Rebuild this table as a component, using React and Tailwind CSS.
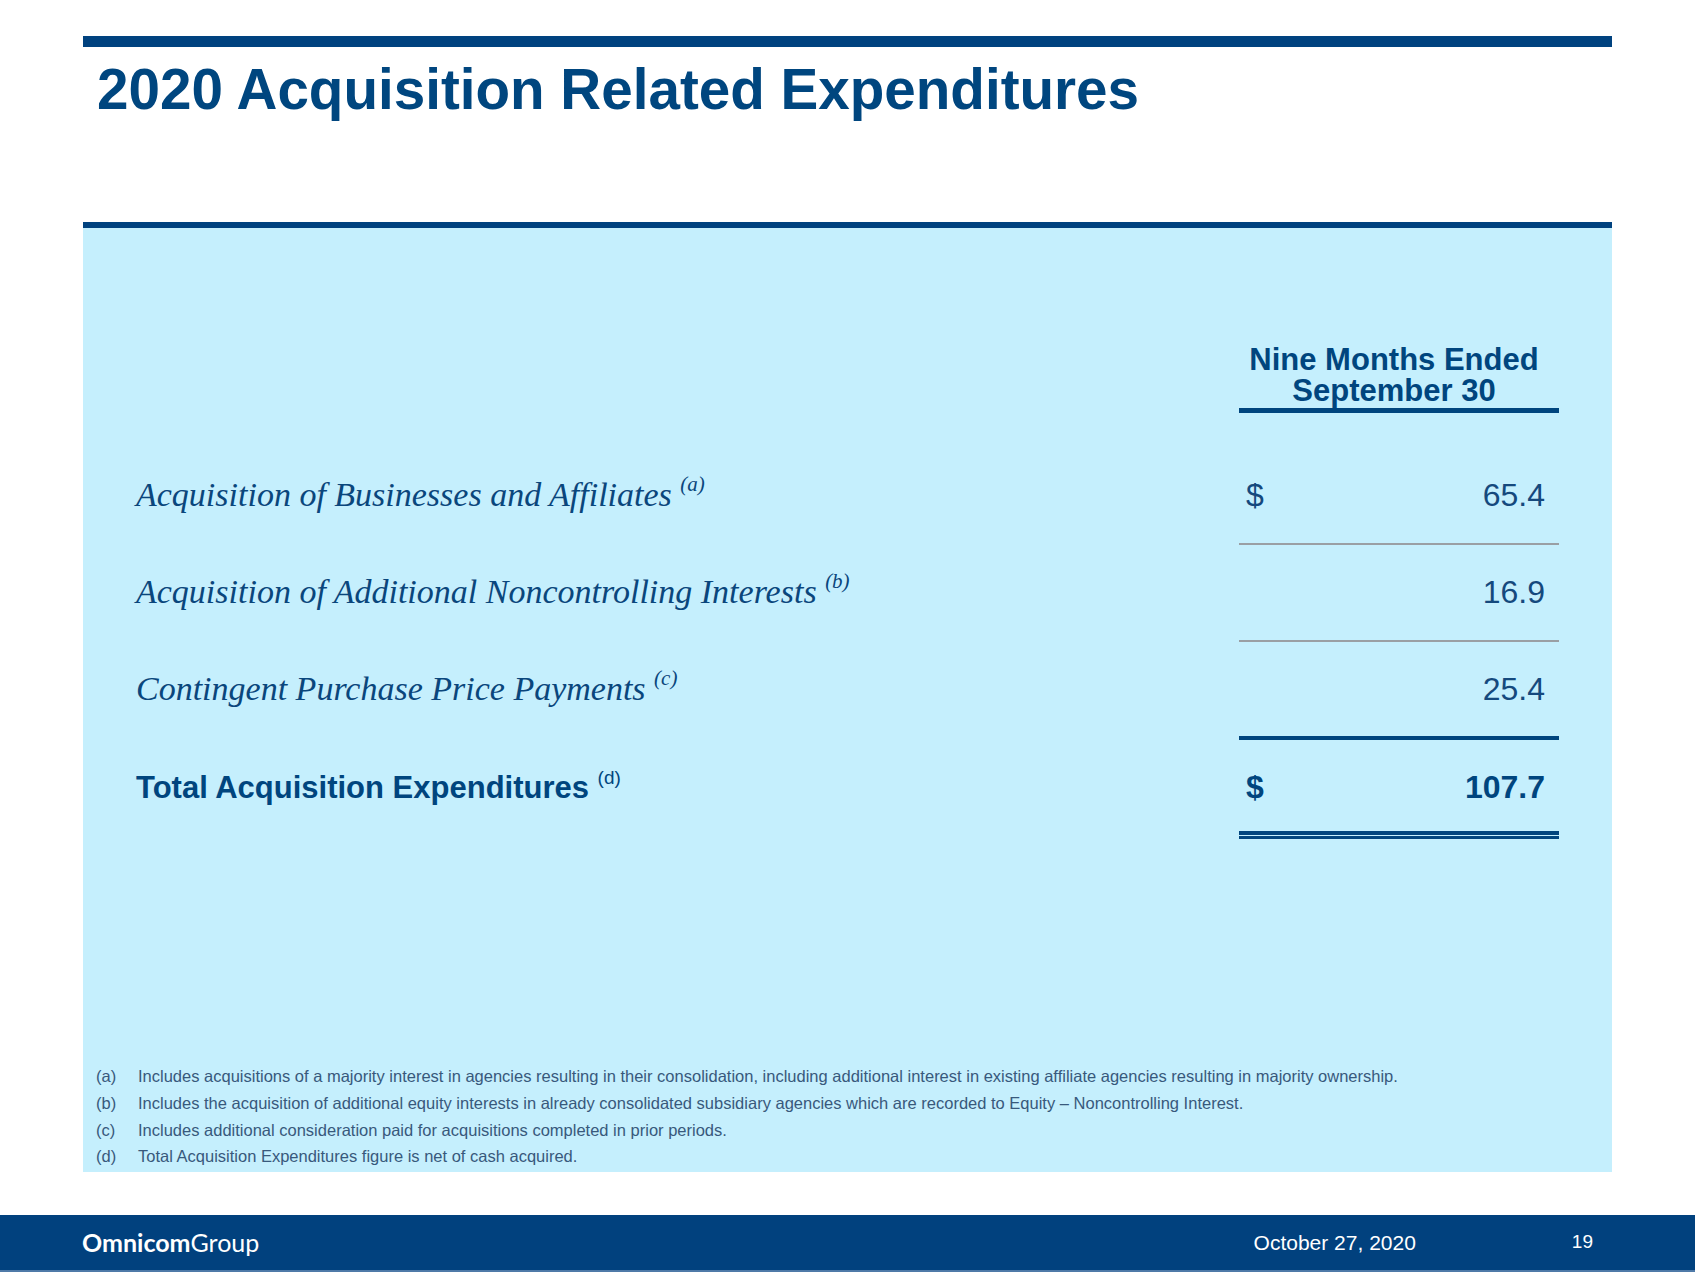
export default function App() {
  const notes = [
    ["(a)", "Includes acquisitions of a majority interest in agencies resulting in their consolidation, including additional interest in existing affiliate agencies resulting in majority ownership."],
    ["(b)", "Includes the acquisition of additional equity interests in already consolidated subsidiary agencies which are recorded to Equity \u2013 Noncontrolling Interest."],
    ["(c)", "Includes additional consideration paid for acquisitions completed in prior periods."],
    ["(d)", "Total Acquisition Expenditures figure is net of cash acquired."],
  ];

  const label = "flex-1 pl-[53px] font-['Liberation_Serif',serif] italic text-[34px] leading-[40px] text-[#0a467c]";
  const sup = "relative -top-[15px] text-[21px] leading-none";

  return (
    <div className="w-[1695px] h-[1272px] bg-white flex flex-col font-['Liberation_Sans',Arial,sans-serif] text-[#00457e]">
      <div className="px-[83px] pt-[36px] flex flex-col">
        <div className="h-[11px] bg-[#00427f]" />
        <div className="h-[175px] pl-[14px] pt-[15px]">
          <h1 className="text-[56.6px] leading-[56px] font-bold text-[#00467f]">
            2020 Acquisition Related Expenditures
          </h1>
        </div>
        <div className="h-[6px] bg-[#00427f]" />

        <div className="h-[944px] bg-[#c5effd] flex flex-col">
          {/* header */}
          <div className="pt-[116px] flex">
            <div className="flex-1" />
            <div className="w-[320px] mr-[53px] flex flex-col">
              <div className="pr-[10px] text-[31px] leading-[31px] font-bold text-center text-[#00457e]">
                <div>Nine Months Ended</div>
                <div>September 30</div>
              </div>
              <div className="mt-[2px] h-[5px] bg-[#00457e]" />
            </div>
          </div>

          {/* row 1 */}
          <div className="flex items-baseline h-[130px] pt-[62px]">
            <div className={label}>
              Acquisition of Businesses and Affiliates{" "}
              <span className={sup}>(a)</span>
            </div>
            <div className="w-[320px] mr-[53px] flex justify-between pl-[7px] pr-[14px] text-[32px] leading-[40px] text-[#15497d]">
              <span>$</span>
              <span>65.4</span>
            </div>
          </div>
          <div className="flex">
            <div className="flex-1" />
            <div className="w-[320px] mr-[53px] h-[2px] bg-[#9a9fa4]" />
          </div>

          {/* row 2 */}
          <div className="flex items-baseline h-[95px] pt-[27px]">
            <div className={label}>
              Acquisition of Additional Noncontrolling Interests{" "}
              <span className={sup}>(b)</span>
            </div>
            <div className="w-[320px] mr-[53px] flex justify-end pl-[7px] pr-[14px] text-[32px] leading-[40px] text-[#15497d]">
              <span>16.9</span>
            </div>
          </div>
          <div className="flex">
            <div className="flex-1" />
            <div className="w-[320px] mr-[53px] h-[2px] bg-[#9a9fa4]" />
          </div>

          {/* row 3 */}
          <div className="flex items-baseline h-[94px] pt-[27px]">
            <div className={label}>
              Contingent Purchase Price Payments{" "}
              <span className={sup}>(c)</span>
            </div>
            <div className="w-[320px] mr-[53px] flex justify-end pl-[7px] pr-[14px] text-[32px] leading-[40px] text-[#15497d]">
              <span>25.4</span>
            </div>
          </div>
          <div className="flex">
            <div className="flex-1" />
            <div className="w-[320px] mr-[53px] h-[4px] bg-[#00457e]" />
          </div>

          {/* row 4 total */}
          <div className="flex items-baseline h-[91px] pt-[27px]">
            <div className="flex-1 pl-[53px] font-bold text-[31px] leading-[40px] text-[#00457e]">
              Total Acquisition Expenditures{" "}
              <span className="relative -top-[14px] text-[19px] leading-none font-normal">(d)</span>
            </div>
            <div className="w-[320px] mr-[53px] flex justify-between pl-[7px] pr-[14px] text-[32px] leading-[40px] font-bold text-[#00457e]">
              <span>$</span>
              <span>107.7</span>
            </div>
          </div>
          <div className="flex">
            <div className="flex-1" />
            <div className="w-[320px] mr-[53px] flex flex-col">
              <div className="h-[4px] bg-[#00457e]" />
              <div className="h-[1px]" />
              <div className="h-[3px] bg-[#00457e]" />
            </div>
          </div>

          {/* footnotes */}
          <div className="mt-auto pl-[13px] pb-[2px] text-[16.5px] leading-[26.7px] text-[#38597c]">
            {notes.map(([k, t]) => (
              <div key={k} className="flex">
                <span className="w-[42px] shrink-0">{k}</span>
                <span>{t}</span>
              </div>
            ))}
          </div>
        </div>
      </div>

      {/* footer */}
      <div className="mt-[43px] h-[57px] bg-[#01417e] border-b-2 border-[#4f7aa8] flex items-center text-white">
        <div className="pl-[82px] font-['Lato',sans-serif] text-[25px] leading-none">
          <span className="font-bold">Omnicom</span>
          <span className="font-normal">Group</span>
        </div>
        <div className="flex-1" />
        <div className="text-[21px] leading-none">October 27, 2020</div>
        <div className="w-[156px]" />
        <div className="text-[19px] leading-none pr-[102px] -mt-[3px]">19</div>
      </div>
    </div>
  );
}
